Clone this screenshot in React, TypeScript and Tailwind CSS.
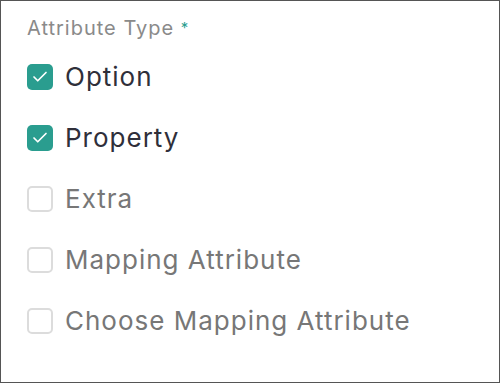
import { Check } from 'lucide-react'

const options = [
  { label: 'Option', checked: true },
  { label: 'Property', checked: true },
  { label: 'Extra', checked: false },
  { label: 'Mapping Attribute', checked: false },
  { label: 'Choose Mapping Attribute', checked: false },
]

export default function App() {
  return (
    <div className="w-[500px] h-[384px] bg-white font-['Inter',sans-serif]">
      <div className="w-[500px] h-[383px] border border-[#555] pl-[26px] pt-[14px]">
        <div className="text-[20px] leading-[26px] tracking-[1px] text-[#8a8a8a]">
          Attribute Type <span className="text-[15px] align-top text-[#2a9d8f]">*</span>
        </div>
        <div className="flex flex-col gap-[35px] mt-[23px]">
          {options.map((o) => (
            <label key={o.label} className="flex items-center gap-[12px] h-[26px]">
              {o.checked ? (
                <span className="w-[26px] h-[26px] rounded-[5px] bg-[#2a9d8f] flex items-center justify-center">
                  <Check className="size-[18px] text-white" strokeWidth={2.25} />
                </span>
              ) : (
                <span className="w-[26px] h-[26px] rounded-[5px] border-2 border-[#dcdcdc] bg-white" />
              )}
              <span
                className={
                  'text-[26px] leading-[26px] tracking-[1px] ' +
                  (o.checked ? 'text-[#2f2f3a]' : 'text-[#777]')
                }
              >
                {o.label}
              </span>
            </label>
          ))}
        </div>
      </div>
    </div>
  )
}
